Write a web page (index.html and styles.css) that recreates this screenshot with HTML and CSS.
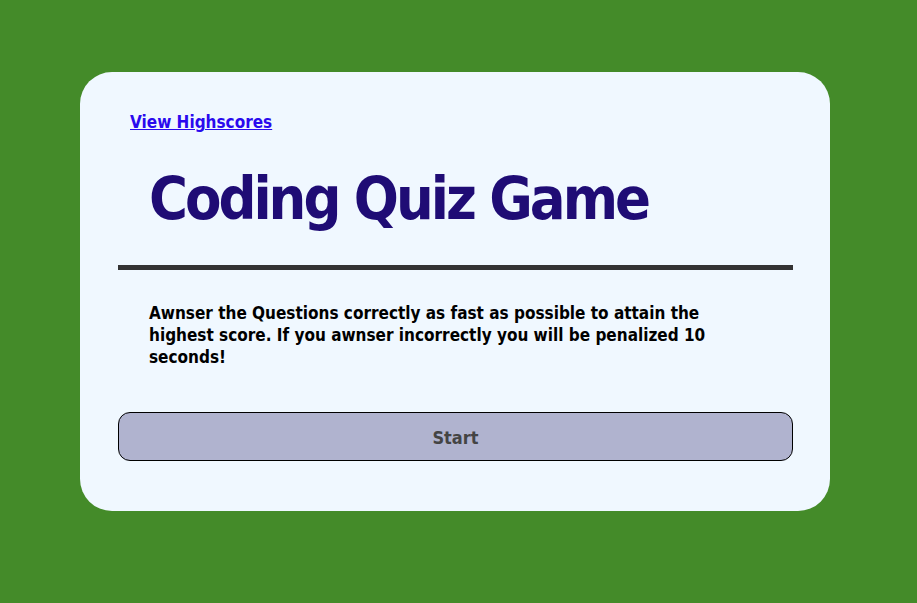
FILE: index.html
```html
<!DOCTYPE html>
<html>
<head>
<meta charset="utf-8">
<link rel="stylesheet" href="styles.css">
</head>
<body>
<main class="card">
  <a class="scores" href="#">View Highscores</a>
  <h1 class="title">Coding Quiz Game</h1>
  <hr class="rule">
  <p class="intro">Awnser the Questions correctly as fast as possible to attain the highest score. If you awnser incorrectly you will be penalized 10 seconds!</p>
  <button class="start">Start</button>
</main>
</body>
</html>
```

FILE: styles.css
```css
html, body {
  margin: 0;
  padding: 0;
}
body {
  background: #448b29;
  width: 917px;
  height: 603px;
  font-family: "DejaVu Sans Condensed", "Liberation Sans", sans-serif;
  font-weight: bold;
  padding-top: 72px;
  box-sizing: border-box;
}
.card {
  margin-left: 80px;
  width: 750px;
  height: 439px;
  box-sizing: border-box;
  background: #f0f8ff;
  border-radius: 32px;
  padding: 38px 37px 0 38px;
  display: flex;
  flex-direction: column;
}
.scores {
  margin-left: 12px;
  font-size: 17px;
  color: #2a0aee;
  text-decoration: underline;
  line-height: 24px;
  align-self: flex-start;
}
.title {
  margin: 26px 0 0 31px;
  font-size: 59px;
  letter-spacing: -3px;
  line-height: 78px;
  color: #1f0c75;
}
.rule {
  margin: 27px 0 0 0;
  border: none;
  height: 5px;
  background: #333;
}
.intro {
  margin: 32px 0 0 31px;
  width: 570px;
  font-size: 17px;
  line-height: 22px;
  color: #000;
}
.start {
  margin-top: 44px;
  height: 49px;
  padding-top: 2px;
  background: #b0b3cf;
  border: 1px solid #000;
  border-radius: 12px;
  font-family: inherit;
  font-weight: bold;
  font-size: 18px;
  color: #444;
}
```
